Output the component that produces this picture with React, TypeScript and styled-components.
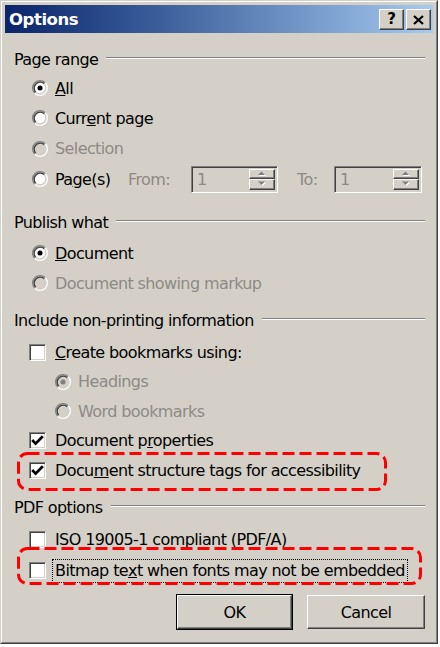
import React from 'react';
import styled, { createGlobalStyle, css } from 'styled-components';

const FACE = '#d4d0c8';
const DISABLED = '#8d8a85';

const Global = createGlobalStyle`
  html, body { margin: 0; padding: 0; background: #fff; }
  body { font-family: "DejaVu Sans", Verdana, sans-serif; }
`;

const Window = styled.div`
  position: relative;
  width: 438px;
  height: 644px;
  box-sizing: border-box;
  border: 1px solid;
  border-color: ${FACE} #404040 #404040 ${FACE};
  background: ${FACE};
`;

const Frame = styled.div`
  height: 100%;
  box-sizing: border-box;
  border: 1px solid;
  border-color: #fff #808080 #808080 #fff;
  padding: 3px;
  display: flex;
  flex-direction: column;
`;

const TitleBar = styled.div`
  height: 28px;
  flex: none;
  box-sizing: border-box;
  background: linear-gradient(to right, #0a246a 0%, #3a5d9a 35%, #a6caf0 100%);
  display: flex;
  align-items: center;
  justify-content: space-between;
  padding: 0 2px 0 4px;
`;

const Title = styled.span`
  color: #fff;
  font-weight: bold;
  font-size: 16.5px;
  letter-spacing: -0.45px;
`;

const CaptionButtons = styled.div`
  display: flex;
  gap: 2px;
  margin-top: 1px;
`;

const bevel = css`
  background: ${FACE};
  border: 1px solid;
  border-color: #fff #404040 #404040 #fff;
  box-shadow: inset -1px -1px #808080, inset 1px 1px ${FACE};
`;

const CaptionButton = styled.div`
  ${bevel};
  width: 25px;
  height: 21px;
  box-sizing: border-box;
  display: flex;
  align-items: center;
  justify-content: center;
  font-weight: bold;
  font-size: 15px;
  color: #000;
  line-height: 1;
`;

const Body = styled.div`
  flex: 1;
  padding: 14px 8px 0 9px;
  font-size: 16px;
  letter-spacing: -0.6px;
  color: #000;
  display: flex;
  flex-direction: column;
`;

const Section = styled.section<{ $mt: number }>`
  margin-top: ${(p) => p.$mt}px;
  display: flex;
  flex-direction: column;
`;

const Header = styled.div<{ $gap: number }>`
  height: 24px;
  display: flex;
  align-items: center;
  gap: 8px;
  margin-bottom: ${(p) => p.$gap}px;
  white-space: nowrap;
  &::after {
    content: '';
    flex: 1;
    height: 0;
    border-top: 1px solid #808080;
    border-bottom: 1px solid #fff;
    margin-top: -2px;
  }
`;

const Row = styled.div<{ $h: number; $indent: number }>`
  position: relative;
  height: ${(p) => p.$h}px;
  display: flex;
  align-items: center;
  padding-left: ${(p) => p.$indent}px;
  white-space: nowrap;
`;

const Label = styled.span<{ $disabled?: boolean }>`
  color: ${(p) => (p.$disabled ? DISABLED : '#000')};
`;

const FocusLabel = styled.span`
  border: 1px dotted #000;
  padding: 0 2px;
  margin-left: -3px;
  height: 22px;
  display: flex;
  align-items: center;
`;

const Option = styled.div<{ $w?: number }>`
  display: flex;
  align-items: center;
  ${(p) => (p.$w ? `width: ${p.$w}px; flex: none;` : '')}
`;

const RadioSvg = styled.svg`
  width: 16px;
  height: 16px;
  flex: none;
  margin-right: 7px;
`;

function Radio({ checked, disabled }: { checked?: boolean; disabled?: boolean }) {
  return (
    <RadioSvg viewBox="0 0 12 12">
      <circle cx="6" cy="6" r="4.2" fill={disabled ? FACE : '#fff'} />
      <path d="M2.11 9.89A5.5 5.5 0 0 1 9.89 2.11" stroke="#808080" fill="none" />
      <path d="M9.89 2.11A5.5 5.5 0 0 1 2.11 9.89" stroke="#fff" fill="none" />
      <path d="M2.82 9.18A4.5 4.5 0 0 1 9.18 2.82" stroke="#404040" fill="none" />
      <path d="M9.18 2.82A4.5 4.5 0 0 1 2.82 9.18" stroke={FACE} fill="none" />
      {checked && <circle cx="6" cy="6" r="1.9" fill={disabled ? '#808080' : '#000'} />}
    </RadioSvg>
  );
}

const CheckFrame = styled.span`
  width: 17px;
  height: 17px;
  box-sizing: border-box;
  flex: none;
  border: 1px solid;
  border-color: #808080 #fff #fff #808080;
  box-shadow: inset 1px 1px #404040, inset -1px -1px ${FACE};
  background: #fff;
  display: flex;
  align-items: center;
  justify-content: center;
  margin-right: 9px;
`;

function Check({ checked }: { checked?: boolean }) {
  return (
    <CheckFrame>
      {checked && (
        <svg width="13" height="13" viewBox="0 0 13 13">
          <polyline points="1.2,6 4.6,9.6 11.8,2.2" fill="none" stroke="#000" strokeWidth="2.7" />
        </svg>
      )}
    </CheckFrame>
  );
}

const FieldLabel = styled.span<{ $w: number; $ml?: number }>`
  width: ${(p) => p.$w}px;
  margin-left: ${(p) => p.$ml ?? 0}px;
  flex: none;
  color: ${DISABLED};
`;

const SpinBox = styled.div<{ $w: number }>`
  width: ${(p) => p.$w}px;
  height: 27px;
  flex: none;
  box-sizing: border-box;
  border: 1px solid;
  border-color: #808080 #fff #fff #808080;
  box-shadow: inset 1px 1px #404040, inset -1px -1px ${FACE};
  background: ${FACE};
  padding: 2px;
  display: flex;
`;

const SpinValue = styled.span`
  flex: 1;
  color: ${DISABLED};
  padding-left: 3px;
  display: flex;
  align-items: center;
`;

const SpinButtons = styled.div`
  width: 26px;
  display: flex;
  flex-direction: column;
`;

const SpinButton = styled.div`
  ${bevel};
  flex: 1;
  box-sizing: border-box;
  display: flex;
  align-items: center;
  justify-content: center;
`;

function Arrow({ up }: { up?: boolean }) {
  return (
    <svg width="10" height="6" viewBox="0 0 10 6">
      <polygon points={up ? '5.5,1.5 9,5 2,5' : '2,1.5 9,1.5 5.5,5'} fill="#fff" />
      <polygon points={up ? '4.5,0.5 8,4 1,4' : '1,0.5 8,0.5 4.5,4'} fill="#808080" />
    </svg>
  );
}

function Spin({ w }: { w: number }) {
  return (
    <SpinBox $w={w}>
      <SpinValue>1</SpinValue>
      <SpinButtons>
        <SpinButton>
          <Arrow up />
        </SpinButton>
        <SpinButton>
          <Arrow />
        </SpinButton>
      </SpinButtons>
    </SpinBox>
  );
}

const Callout = styled.svg<{ $l: number; $t: number; $w: number; $h: number }>`
  position: absolute;
  left: ${(p) => p.$l}px;
  top: ${(p) => p.$t}px;
  width: ${(p) => p.$w}px;
  height: ${(p) => p.$h}px;
  pointer-events: none;
  overflow: visible;
`;

function RedBox({ l, t, w, h }: { l: number; t: number; w: number; h: number }) {
  return (
    <Callout $l={l} $t={t} $w={w} $h={h} viewBox={`0 0 ${w} ${h}`}>
      <rect
        x="1.5"
        y="1.5"
        width={w - 3}
        height={h - 3}
        rx="9"
        fill="none"
        stroke="#ff0000"
        strokeWidth="3"
        strokeDasharray="12 5"
      />
    </Callout>
  );
}

const ButtonRow = styled.div`
  display: flex;
  justify-content: flex-end;
  align-items: center;
  gap: 15px;
  margin-top: 9px;
`;

const PushButton = styled.div<{ $default?: boolean }>`
  ${bevel};
  width: ${(p) => (p.$default ? 115 : 118)}px;
  height: 34px;
  box-sizing: border-box;
  display: flex;
  align-items: center;
  justify-content: center;
  ${(p) => p.$default && css`outline: 1px solid #000;`}
`;

export default function App() {
  return (
    <>
      <Global />
      <Window>
        <Frame>
          <TitleBar>
            <Title>Options</Title>
            <CaptionButtons>
              <CaptionButton>?</CaptionButton>
              <CaptionButton>
                <svg width="11" height="10" viewBox="0 0 11 10">
                  <path d="M1 1L10 9M10 1L1 9" stroke="#000" strokeWidth="2.2" />
                </svg>
              </CaptionButton>
            </CaptionButtons>
          </TitleBar>
          <Body>
            <Section $mt={0}>
              <Header $gap={2}>Page range</Header>
              <Row $h={30.33} $indent={18}>
                <Radio checked />
                <Label>
                  <u>A</u>ll
                </Label>
              </Row>
              <Row $h={30.33} $indent={18}>
                <Radio />
                <Label>
                  Curr<u>e</u>nt page
                </Label>
              </Row>
              <Row $h={30.33} $indent={18}>
                <Radio disabled />
                <Label $disabled>Selection</Label>
              </Row>
              <Row $h={30.33} $indent={18}>
                <Option $w={96}>
                  <Radio />
                  <Label>
                    Pa<u>g</u>e(s)
                  </Label>
                </Option>
                <FieldLabel $w={63}>From:</FieldLabel>
                <Spin w={87} />
                <FieldLabel $w={37} $ml={19}>
                  To:
                </FieldLabel>
                <Spin w={88} />
              </Row>
            </Section>

            <Section $mt={16}>
              <Header $gap={4}>Publish what</Header>
              <Row $h={30} $indent={18}>
                <Radio checked />
                <Label>
                  <u>D</u>ocument
                </Label>
              </Row>
              <Row $h={30} $indent={18}>
                <Radio disabled />
                <Label $disabled>Document showing markup</Label>
              </Row>
            </Section>

            <Section $mt={10}>
              <Header $gap={5}>Include non-printing information</Header>
              <Row $h={29.6} $indent={15}>
                <Check />
                <Label>
                  <u>C</u>reate bookmarks using:
                </Label>
              </Row>
              <Row $h={29.6} $indent={41}>
                <Radio checked disabled />
                <Label $disabled>Headings</Label>
              </Row>
              <Row $h={29.6} $indent={41}>
                <Radio disabled />
                <Label $disabled>Word bookmarks</Label>
              </Row>
              <Row $h={29.6} $indent={15}>
                <Check checked />
                <Label>
                  Document p<u>r</u>operties
                </Label>
              </Row>
              <Row $h={29.6} $indent={15}>
                <Check checked />
                <Label>
                  Docu<u>m</u>ent structure tags for accessibility
                </Label>
                <RedBox l={3} t={-4} w={370} h={39} />
              </Row>
            </Section>

            <Section $mt={10}>
              <Header $gap={5}>PDF options</Header>
              <Row $h={31} $indent={15}>
                <Check />
                <Label>ISO 19005-1 compliant (PDF/A)</Label>
              </Row>
              <Row $h={31} $indent={15}>
                <Check />
                <FocusLabel>
                  Bitmap te<u>x</u>t when fonts may not be embedded
                </FocusLabel>
                <RedBox l={3} t={-8} w={405} h={38} />
              </Row>
            </Section>

            <ButtonRow>
              <PushButton $default>OK</PushButton>
              <PushButton>Cancel</PushButton>
            </ButtonRow>
          </Body>
        </Frame>
      </Window>
    </>
  );
}
